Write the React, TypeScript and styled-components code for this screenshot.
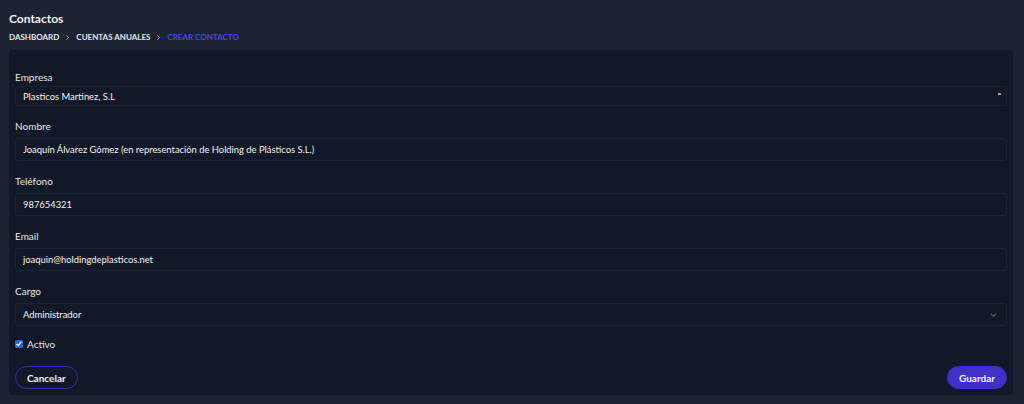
import React from "react";
import styled, { createGlobalStyle } from "styled-components";

const Global = createGlobalStyle`
  html, body { margin: 0; padding: 0; background: #1c2333; }
  body { font-family: Lato, "Noto Sans", sans-serif; color: #e5e7eb; }
  * { box-sizing: border-box; }
`;

const Page = styled.div`
  padding: 11px 11px 9px 9px;
  display: flex;
  flex-direction: column;
`;

const Title = styled.h1`
  margin: 0;
  font-size: 12px;
  line-height: 16px;
  font-weight: 700;
  color: #f3f4f6;
`;

const Crumbs = styled.nav`
  display: flex;
  align-items: center;
  gap: 4px;
  margin-top: 3px;
  height: 14px;
`;

const Crumb = styled.span<{ $active?: boolean }>`
  font-size: 8px;
  font-weight: 700;
  text-transform: uppercase;
  color: ${(p) => (p.$active ? "#4f46e5" : "#e5e7eb")};
`;

const Sep = styled.svg`
  width: 7px;
  height: 7px;
  color: #9ca3af;
  margin: 0 1px;
`;

const Card = styled.form`
  margin-top: 6px;
  background: #111827;
  border-radius: 4px;
  padding: 21px 6px 6px 6px;
  display: flex;
  flex-direction: column;
`;

const Field = styled.div<{ $tight?: boolean }>`
  display: flex;
  flex-direction: column;
  margin-bottom: 14px;
`;

const Label = styled.label<{ $gap?: number }>`
  font-size: 10px;
  line-height: 12px;
  color: #e5e7eb;
  margin-bottom: ${(p) => p.$gap ?? 6}px;
`;

const Box = styled.div<{ $h: number }>`
  position: relative;
  height: ${(p) => p.$h}px;
  border: 1px solid #1b2335;
  border-radius: 3px;
  background: #111827;
  display: flex;
  align-items: center;
  padding: 0 7px;
  font-size: 9.4px;
  color: #f3f4f6;
`;

const Input = styled.input`
  all: unset;
  width: 100%;
  font-family: inherit;
  font-size: 9.4px;
  color: #f3f4f6;
`;

const TinyArrow = styled.span`
  position: absolute;
  right: 5px;
  top: 6px;
  width: 3px;
  height: 2px;
  background: #9ca3af;
`;

const Chevron = styled.svg`
  position: absolute;
  right: 8px;
  top: 50%;
  transform: translateY(-50%);
  width: 9px;
  height: 9px;
  color: #5b6472;
`;

const CheckRow = styled.label`
  display: flex;
  align-items: center;
  gap: 4px;
  font-size: 10px;
  color: #e5e7eb;
  margin-top: -4px;
  height: 16px;
`;

const Check = styled.input`
  margin: 0;
  width: 8px;
  height: 8px;
  accent-color: #2563eb;
`;

const Actions = styled.div`
  display: flex;
  justify-content: space-between;
  margin-top: 14px;
`;

const Button = styled.button<{ $primary?: boolean }>`
  font-family: inherit;
  font-size: 10px;
  font-weight: 700;
  height: 23px;
  padding: 0 11px;
  border-radius: 999px;
  color: #f3f4f6;
  background: ${(p) => (p.$primary ? "#4030c8" : "transparent")};
  border: 1px solid ${(p) => (p.$primary ? "#4030c8" : "#3b2fb0")};
  cursor: pointer;
`;

const SepIcon = () => (
  <Sep viewBox="0 0 10 10" fill="none" stroke="currentColor" strokeWidth="1.4">
    <path d="M3.5 2 L6.5 5 L3.5 8" />
  </Sep>
);

export default function App() {
  return (
    <>
      <Global />
      <Page>
        <Title>Contactos</Title>
        <Crumbs>
          <Crumb>Dashboard</Crumb>
          <SepIcon />
          <Crumb>Cuentas Anuales</Crumb>
          <SepIcon />
          <Crumb $active>Crear Contacto</Crumb>
        </Crumbs>
        <Card onSubmit={(e) => e.preventDefault()}>
          <Field>
            <Label $gap={3}>Empresa</Label>
            <Box $h={20}>
              Plasticos Martinez, S.L
              <TinyArrow />
            </Box>
          </Field>
          <Field>
            <Label>Nombre</Label>
            <Box $h={23}>
              <Input defaultValue="Joaquín Álvarez Gómez (en representación de Holding de Plásticos S.L.)" />
            </Box>
          </Field>
          <Field>
            <Label>Teléfono</Label>
            <Box $h={23}>
              <Input defaultValue="987654321" />
            </Box>
          </Field>
          <Field>
            <Label>Email</Label>
            <Box $h={23}>
              <Input defaultValue="joaquin@holdingdeplasticos.net" />
            </Box>
          </Field>
          <Field>
            <Label>Cargo</Label>
            <Box $h={23}>
              Administrador
              <Chevron viewBox="0 0 10 10" fill="none" stroke="currentColor" strokeWidth="1.2">
                <path d="M2 3.5 L5 6.5 L8 3.5" />
              </Chevron>
            </Box>
          </Field>
          <CheckRow>
            <Check type="checkbox" defaultChecked />
            Activo
          </CheckRow>
          <Actions>
            <Button type="button">Cancelar</Button>
            <Button type="submit" $primary>
              Guardar
            </Button>
          </Actions>
        </Card>
      </Page>
    </>
  );
}
